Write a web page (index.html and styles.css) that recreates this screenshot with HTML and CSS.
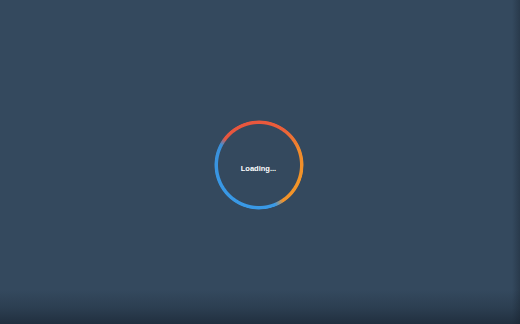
FILE: index.html
```html
<!DOCTYPE html>
<html>
<head>
<meta charset="utf-8">
<link rel="stylesheet" href="styles.css">
</head>
<body>
<div class="stage">
  <div class="loader">
    <div class="ring"></div>
    <span class="label">Loading...</span>
  </div>
</div>
</body>
</html>
```

FILE: styles.css
```css
html, body {
  margin: 0;
  padding: 0;
  width: 520px;
  height: 324px;
  overflow: hidden;
}
body {
  background: #34495e;
  font-family: "Liberation Sans", Arial, sans-serif;
}
.stage {
  width: 520px;
  height: 324px;
  display: flex;
  align-items: center;
  justify-content: center;
  box-sizing: border-box;
  padding: 5px 3px 0 0;
  background:
    linear-gradient(to bottom, rgba(0,0,0,0) 0, rgba(0,0,0,0) 290px, rgba(20,30,42,0.25) 308px, rgba(20,30,42,0.6) 324px),
    linear-gradient(to right, rgba(0,0,0,0) 512px, rgba(20,30,42,0.35) 520px);
}
.loader {
  position: relative;
  width: 90px;
  height: 90px;
  display: flex;
  align-items: center;
  justify-content: center;
}
.ring {
  position: absolute;
  inset: 0;
  border-radius: 50%;
  background: conic-gradient(from 0deg,
    #e9573d 0deg,
    #eb603a 35deg,
    #f08a2c 70deg,
    #f29528 110deg,
    #f1922a 146deg,
    #3a9ae6 158deg,
    #3897e4 250deg,
    #3b8fd8 298deg,
    #e6563f 308deg,
    #e9573d 360deg);
  -webkit-mask: radial-gradient(circle closest-side, transparent 40.5px, #000 41.5px, #000 44px, transparent 45px);
  mask: radial-gradient(circle closest-side, transparent 40.5px, #000 41.5px, #000 44px, transparent 45px);
  filter: blur(0.3px);
}
.label {
  position: relative;
  color: #ffffff;
  font-size: 7.5px;
  font-weight: bold;
  margin-top: 8px;
  letter-spacing: 0;
}
```
